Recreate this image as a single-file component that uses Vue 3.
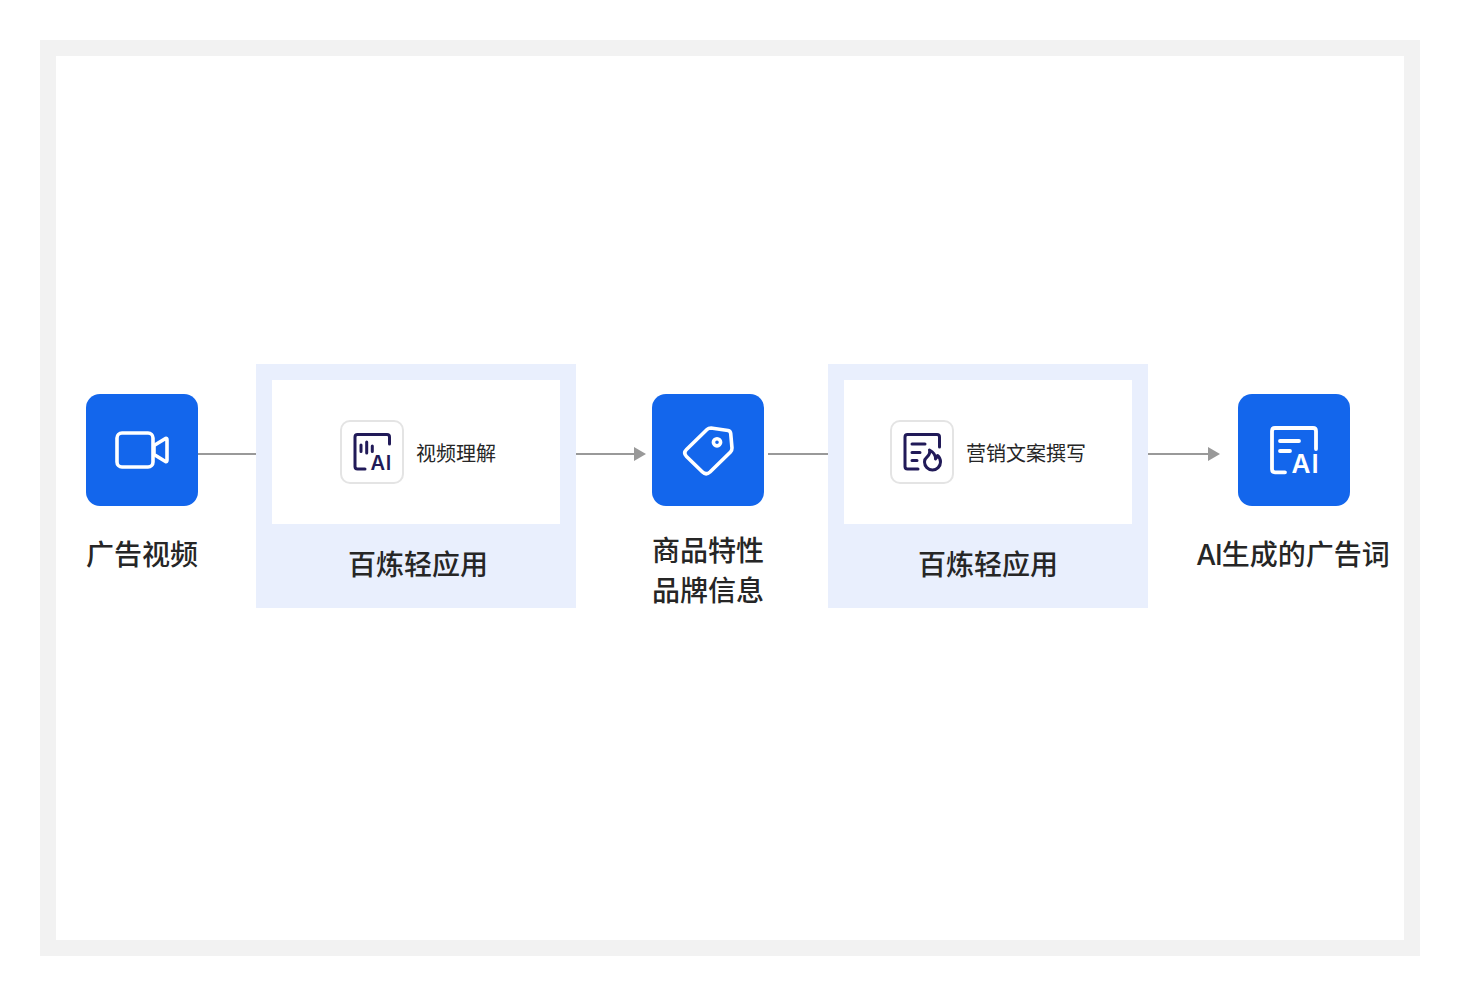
<script setup>
</script>

<template>
  <div class="page">
    <div class="frame">
      <div class="flow">
        <div class="node">
          <div class="tile">
            <svg viewBox="0 0 112 112" width="112" height="112" fill="none" stroke="#fff" stroke-width="3.6" stroke-linejoin="round" stroke-linecap="round">
              <rect x="31" y="39" width="36" height="34" rx="5" />
              <path d="M68 51.5 L79.5 44.5 Q81 44 81 46 V66 Q81 68 79.5 67.5 L68 60.5 Z" />
            </svg>
          </div>
          <div class="label">广告视频</div>
        </div>

        <div class="wire wire-a"></div>

        <div class="stage">
          <div class="card nudge">
            <div class="badge">
              <svg viewBox="0 0 64 64" width="64" height="64" fill="none" stroke="#211a58" stroke-width="3" stroke-linecap="round" stroke-linejoin="round">
                <path d="M25 49 H17.5 Q15 49 15 46.5 V17 Q15 14.5 17.5 14.5 H47 Q49.5 14.5 49.5 17 V24" />
                <path d="M21 25 V31.5 M26.7 22 V33 M32.3 26 V31.5" />
                <text x="30.5" y="49.5" class="ai-small">AI</text>
              </svg>
            </div>
            <span class="card-text">视频理解</span>
          </div>
          <div class="stage-title nudge">百炼轻应用</div>
        </div>

        <div class="wire arrow arrow-a"></div>

        <div class="node">
          <div class="tile">
            <svg viewBox="0 0 112 112" width="112" height="112" fill="none" stroke="#fff" stroke-width="3.6" stroke-linejoin="round" stroke-linecap="round">
              <path d="M55 35.5 Q56.5 34 59 34 L76 36.5 Q78.5 37 78.7 39.5 L80 54 Q80 56.5 78.5 58 L58 78 Q54 81.5 50.5 78 L34.5 62.5 Q31 59 34.5 55.5 Z" />
              <circle cx="65" cy="48.3" r="3.6" />
            </svg>
          </div>
          <div class="label label-two">商品特性<br />品牌信息</div>
        </div>

        <div class="wire wire-b"></div>

        <div class="stage">
          <div class="card">
            <div class="badge">
              <svg viewBox="0 0 64 64" width="64" height="64" fill="none" stroke="#211a58" stroke-width="3" stroke-linecap="round" stroke-linejoin="round">
                <path d="M28 49 H17.5 Q15 49 15 46.5 V17 Q15 14.5 17.5 14.5 H47 Q49.5 14.5 49.5 17 V27" />
                <path d="M22 24 H35 M22 32.5 H30 M22 40.5 H27" />
                <path d="M39.5 30 Q40.5 34 37 37 Q34.5 39 34.5 42 A8 8 0 0 0 50.5 42 Q50.5 38 47.5 35.5 Q47 38 45.5 39 Q45.5 33 39.5 30 Z" />
              </svg>
            </div>
            <span class="card-text">营销文案撰写</span>
          </div>
          <div class="stage-title">百炼轻应用</div>
        </div>

        <div class="wire arrow arrow-b"></div>

        <div class="node">
          <div class="tile">
            <svg viewBox="0 0 112 112" width="112" height="112" fill="none" stroke="#fff" stroke-width="3.8" stroke-linecap="round" stroke-linejoin="round">
              <path d="M47 78.3 H37 Q34 78.3 34 75.3 V37 Q34 34 37 34 H75 Q78 34 78 37 V55" />
              <path d="M42 47 H61 M42 57 H52" />
              <text x="53.5" y="78.6" class="ai-large">AI</text>
            </svg>
          </div>
          <div class="label label-mixed"><span class="latin">AI</span>生成的广告词</div>
        </div>
      </div>
    </div>
  </div>
</template>

<style scoped>
.page {
  width: 1460px;
  height: 996px;
  padding: 40px;
  box-sizing: border-box;
  background: #fff;
  font-family: "Inter", "Noto Sans CJK SC", sans-serif;
}
.frame {
  height: 100%;
  box-sizing: border-box;
  border: 16px solid #f2f2f2;
  padding: 308px 0 0 30px;
}
.flow {
  display: flex;
  align-items: flex-start;
}
.node {
  width: 112px;
  flex: none;
  padding-top: 30px;
  display: flex;
  flex-direction: column;
  align-items: center;
}
.tile {
  width: 112px;
  height: 112px;
  border-radius: 14px;
  background: #1366ec;
}
.tile svg,
.badge svg {
  display: block;
}
.label {
  margin-top: 29px;
  font-size: 28px;
  line-height: 40px;
  font-weight: 500;
  color: #262626;
  white-space: nowrap;
  text-align: center;
}
.label-two {
  margin-top: 25px;
}
.label-mixed {
  padding-right: 2px;
}
.latin {
  letter-spacing: -1px;
}
.wire {
  flex: none;
  height: 2px;
  margin-top: 89px;
  background: #999;
  position: relative;
}
.wire-a {
  width: 58px;
}
.wire-b {
  width: 60px;
  margin-left: 4px;
}
.arrow {
  background: linear-gradient(#999, #999) left center / calc(100% - 12px) 2px no-repeat;
}
.arrow::after {
  content: "";
  position: absolute;
  right: 0;
  top: -6px;
  border-left: 12px solid #999;
  border-top: 7px solid transparent;
  border-bottom: 7px solid transparent;
}
.arrow-a {
  width: 70px;
  margin-right: 6px;
}
.arrow-b {
  width: 72px;
  margin-right: 18px;
}
.stage {
  width: 320px;
  height: 244px;
  flex: none;
  box-sizing: border-box;
  padding: 16px 16px 0;
  background: #e9effd;
}
.card {
  height: 144px;
  background: #fff;
  display: flex;
  align-items: center;
  justify-content: center;
  gap: 12px;
}
.nudge {
  padding-left: 4px;
  box-sizing: border-box;
}
.badge {
  width: 64px;
  height: 64px;
  box-sizing: border-box;
  border-radius: 10px;
  box-shadow: inset 0 0 0 2px #e4e4e4;
}
.card-text {
  margin-top: 4px;
  font-size: 20px;
  line-height: 28px;
  color: #262626;
}
.stage-title {
  height: 80px;
  line-height: 82px;
  font-size: 28px;
  font-weight: 500;
  color: #262626;
  text-align: center;
}
.ai-small,
.ai-large {
  font-family: "Inter", "Liberation Sans", sans-serif;
  font-weight: 600;
  stroke: none;
}
.ai-small {
  fill: #211a58;
  font-size: 20px;
  letter-spacing: 0.8px;
}
.ai-large {
  fill: #fff;
  font-size: 26px;
  letter-spacing: 1px;
}
</style>
